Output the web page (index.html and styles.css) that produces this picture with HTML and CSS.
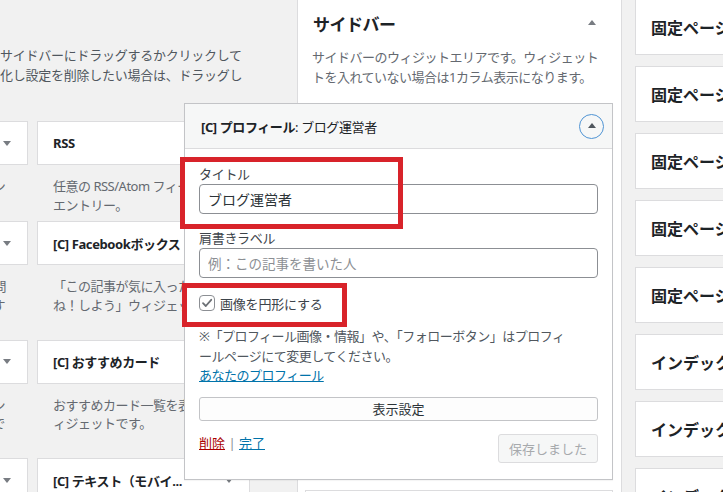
FILE: index.html
```html
<!DOCTYPE html>
<html lang="ja">
<head>
    <meta charset="UTF-8">
    <title>ウィジェット</title>
    <link rel="stylesheet" href="styles.css">
</head>
<body>
    <div class="screen">
        <div class="available">
            <p class="intro">サイドバーにドラッグするかクリックして<br>化し設定を削除したい場合は、ドラッグし</p>

            <div class="widget-grid">
                <div class="widget">
                    <div class="widget-top"><span class="widget-title">ナビゲーションメニュー</span><span class="arrow-down"></span></div>
                    <p class="widget-desc">サイドバーに、ナビゲーション<br>を追加します。</p>
                </div>
                <div class="widget">
                    <div class="widget-top"><span class="widget-title">RSS</span><span class="arrow-down"></span></div>
                    <p class="widget-desc">任意の RSS/Atom フィードからの<br>エントリー。</p>
                </div>

                <div class="widget">
                    <div class="widget-top"><span class="widget-title">[C] よくある質問</span><span class="arrow-down"></span></div>
                    <p class="widget-desc">このサイト内でよくあるご質問<br>と回答をアコーディオン表示す<br>るウィジェットです。</p>
                </div>
                <div class="widget">
                    <div class="widget-top"><span class="widget-title">[C] Facebookボックス</span><span class="arrow-down"></span></div>
                    <p class="widget-desc">「この記事が気に入ったらいい<br>ね！しよう」ウィジェットです。</p>
                </div>

                <div class="widget">
                    <div class="widget-top"><span class="widget-title">[C] 人気記事</span><span class="arrow-down"></span></div>
                    <p class="widget-desc">アクセス数が多い記事ランキン<br>グ形式で表示します。人気順で<br>並べ替えます。</p>
                </div>
                <div class="widget">
                    <div class="widget-top"><span class="widget-title">[C] おすすめカード</span><span class="arrow-down"></span></div>
                    <p class="widget-desc">おすすめカード一覧を表示するウ<br>ィジェットです。</p>
                </div>

                <div class="widget">
                    <div class="widget-top"><span class="widget-title">[C] 新着記事</span><span class="arrow-down"></span></div>
                </div>
                <div class="widget">
                    <div class="widget-top"><span class="widget-title">[C] テキスト（モバイ...</span><span class="arrow-down"></span></div>
                </div>
            </div>
        </div>

        <div class="sidebar">
            <div class="sidebar-name">
                <h2>サイドバー</h2>
                <span class="arrow-up"></span>
            </div>
            <p class="sidebar-desc">サイドバーのウィジットエリアです。ウィジェット<br>トを入れていない場合は1カラム表示になります。</p>

            <div class="sidebar-widgets">
                <div class="widget-open">
                    <div class="open-top">
                        <span class="open-title"><b>[C] プロフィール</b>: ブログ運営者</span>
                        <span class="toggle"><span class="toggle-arrow"></span></span>
                    </div>

                    <div class="open-inside">
                        <div class="field">
                            <label>タイトル</label>
                            <input type="text" value="ブログ運営者">
                        </div>
                        <div class="field">
                            <label>肩書きラベル</label>
                            <input type="text" placeholder="例：この記事を書いた人">
                        </div>
                        <div class="check-row">
                            <span class="checkbox">
                                <svg width="14" height="14" viewBox="0 0 14 14"><path d="M3 7.2 L5.8 10 L11.2 3.8" fill="none" stroke="#6c7075" stroke-width="1.8" stroke-linecap="round" stroke-linejoin="round"/></svg>
                            </span>
                            <span>画像を円形にする</span>
                        </div>
                        <p class="note">※「プロフィール画像・情報」や、「フォローボタン」はプロフィ<br>ールページにて変更してください。<a href="#" class="profile-link">あなたのプロフィール</a></p>
                        <button class="display-btn">表示設定</button>
                        <div class="actions">
                            <span><a href="#" class="delete">削除</a> <span class="sep">|</span> <a href="#" class="done">完了</a></span>
                            <button class="save-btn">保存しました</button>
                        </div>
                    </div>

                    <div class="mark mark-title"></div>
                    <div class="mark mark-check"></div>
                </div>
                <div class="sidebar-widget"></div>
            </div>
        </div>

        <div class="others">
            <div class="holder"><h3>固定ページ（トップ）</h3></div>
            <div class="holder"><h3>固定ページ（上部）</h3></div>
            <div class="holder"><h3>固定ページ（下部）</h3></div>
            <div class="holder"><h3>固定ページ（サイド）</h3></div>
            <div class="holder"><h3>固定ページ（フッター）</h3></div>
            <div class="holder"><h3>インデックス上</h3></div>
            <div class="holder"><h3>インデックス下</h3></div>
            <div class="holder"><h3>インデックスリスト</h3></div>
        </div>
    </div>
</body>
</html>
```

FILE: styles.css
```css
* {
    margin: 0;
    padding: 0;
    box-sizing: border-box;
}

body {
    width: 723px;
    height: 492px;
    overflow: hidden;
    background: #f1f1f1;
    color: #3c434a;
    font-family: "Noto Sans", "Noto Sans CJK JP", sans-serif;
    font-size: 13px;
}

.screen {
    display: flex;
    height: 492px;
}

/* available widgets */
.available {
    flex: none;
    width: 297px;
    padding-top: 45px;
}

.intro {
    line-height: 20px;
    color: #50575e;
    white-space: nowrap;
    letter-spacing: -0.25px;
}

.widget-grid {
    display: grid;
    grid-template-columns: 213px 213px;
    column-gap: 9px;
    margin: 36px 0 0 -185px;
}

.widget-top {
    display: flex;
    align-items: center;
    justify-content: space-between;
    height: 44px;
    padding: 0 16px 0 15px;
    background: #fff;
    border: 1px solid #dcdcde;
    overflow: hidden;
}

.widget-title {
    font-weight: 700;
    color: #1d2327;
    white-space: nowrap;
    letter-spacing: -0.4px;
}

.arrow-down {
    flex: none;
    width: 0;
    height: 0;
    border-left: 4px solid transparent;
    border-right: 4px solid transparent;
    border-top: 5px solid #787c82;
}

.widget-desc {
    padding: 12px 16px 7px;
    line-height: 18.5px;
    color: #646970;
    white-space: nowrap;
    letter-spacing: -0.5px;
}

/* sidebar */
.sidebar {
    flex: none;
    width: 325px;
    background: #fff;
    border-left: 1px solid #dcdcde;
    border-right: 1px solid #dcdcde;
}

.sidebar-name {
    display: flex;
    align-items: center;
    justify-content: space-between;
    padding: 15px 25px 0 15px;
}

.sidebar-name h2 {
    font-size: 17px;
    line-height: 20px;
    font-weight: 700;
    color: #1d2327;
    letter-spacing: -0.5px;
}

.arrow-up {
    width: 0;
    height: 0;
    margin-bottom: 6px;
    border-left: 4px solid transparent;
    border-right: 4px solid transparent;
    border-bottom: 5px solid #787c82;
}

.sidebar-desc {
    margin-top: 12px;
    padding: 0 10px 0 14px;
    line-height: 20px;
    color: #646970;
    white-space: nowrap;
    letter-spacing: -0.5px;
}

.sidebar-widgets {
    padding: 16px 8px 0 7px;
}

.sidebar-widget {
    height: 44px;
    margin-top: 10px;
    background: #fff;
    border: 1px solid #dcdcde;
}

/* opened widget */
.widget-open {
    position: relative;
    z-index: 1;
    margin-left: -121px;
    background: #fff;
    border: 1px solid #c3c4c7;
    box-shadow: 0 1px 1px rgba(0, 0, 0, 0.04);
}

.open-top {
    display: flex;
    align-items: center;
    justify-content: space-between;
    height: 45px;
    padding: 0 8px 0 16px;
    background: #f6f7f7;
    border-bottom: 1px solid #dcdcde;
}

.open-title {
    color: #1d2327;
    letter-spacing: -0.4px;
}

.open-title b {
    font-weight: 700;
}

.toggle {
    display: flex;
    align-items: center;
    justify-content: center;
    width: 25px;
    height: 25px;
    border: 1.5px solid #4f94d4;
    border-radius: 50%;
}

.toggle-arrow {
    width: 0;
    height: 0;
    margin-bottom: 2px;
    border-left: 4px solid transparent;
    border-right: 4px solid transparent;
    border-bottom: 5px solid #50575e;
}

.open-inside {
    padding: 16px 14px 16px 14px;
}

.field + .field {
    margin-top: 15px;
}

.field label {
    display: block;
    line-height: 19px;
    color: #3c434a;
    letter-spacing: -0.3px;
}

.field input {
    display: block;
    width: 100%;
    height: 30px;
    padding: 0 8px;
    border: 1px solid #8c8f94;
    border-radius: 4px;
    font-family: inherit;
    font-size: 14px;
    color: #2c3338;
    outline: none;
}

.field input::placeholder {
    color: #8c8f94;
    font-size: 13.5px;
}

.check-row {
    display: flex;
    align-items: center;
    gap: 5px;
    margin-top: 17px;
    height: 16px;
    letter-spacing: -0.2px;
}

.checkbox {
    display: flex;
    align-items: center;
    justify-content: center;
    width: 16px;
    height: 16px;
    border: 1px solid #8c8f94;
    border-radius: 4px;
}

.note {
    margin-top: 16px;
    line-height: 19.5px;
    color: #50575e;
    letter-spacing: -0.5px;
}

.profile-link {
    display: block;
    color: #0073aa;
}

.display-btn {
    display: block;
    width: 100%;
    height: 24px;
    margin-top: 11px;
    background: #fdfdfd;
    border: 1px solid #c3c4c7;
    border-radius: 3px;
    font-family: inherit;
    font-size: 13px;
    color: #2c3338;
}

.actions {
    display: flex;
    align-items: flex-start;
    justify-content: space-between;
    margin-top: 13px;
    line-height: 18px;
}

.delete {
    color: #a00;
}

.done {
    color: #0073aa;
}

.sep {
    color: #8c8f94;
}

.save-btn {
    width: 100px;
    height: 29px;
    background: #f6f7f7;
    border: 1px solid #dcdcde;
    border-radius: 3px;
    font-family: inherit;
    font-size: 13px;
    color: #a7aaad;
}

/* red annotation frames */
.mark {
    position: absolute;
    border: 5px solid #d8232a;
}

.mark-title {
    left: -5px;
    top: 53px;
    width: 223px;
    height: 72px;
}

.mark-check {
    left: -3px;
    top: 179px;
    width: 165px;
    height: 44px;
}

/* collapsed sidebars on the right */
.others {
    flex: none;
    width: 200px;
    margin: -1px 0 0 13px;
}

.holder {
    display: flex;
    align-items: center;
    height: 56px;
    margin-bottom: 11px;
    padding-left: 15px;
    background: #fff;
    border: 1px solid #dcdcde;
}

.holder h3 {
    font-size: 16px;
    font-weight: 700;
    color: #1d2327;
    white-space: nowrap;
}
```
